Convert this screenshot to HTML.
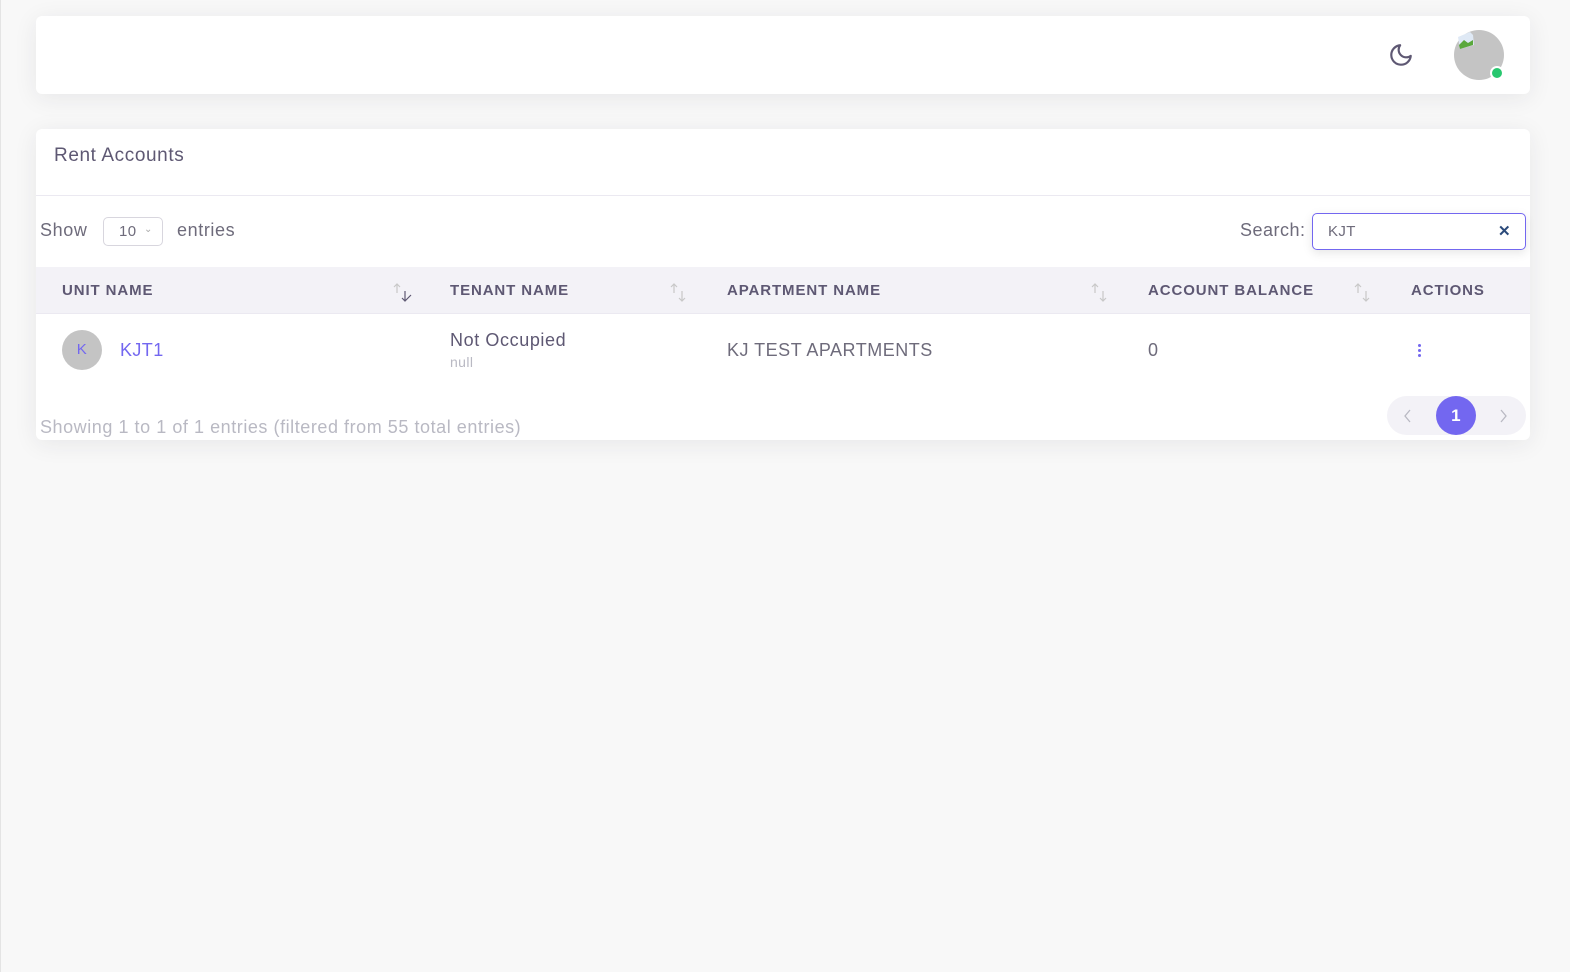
<!DOCTYPE html>
<html><head><meta charset="utf-8"><style>
*{box-sizing:border-box;margin:0;padding:0}
body{width:1570px;height:972px;background:#f8f8f8;font-family:"Liberation Sans",sans-serif;color:#6e6b7b;position:relative;overflow:hidden}
.edge{position:absolute;left:0;top:0;width:1px;height:972px;background:#e4e4e4}
.card{position:absolute;background:#fff;border-radius:6px;box-shadow:0 4px 24px rgba(34,41,47,.08)}
.a{position:absolute;white-space:nowrap;letter-spacing:.4px}
.th{font-size:15px;font-weight:bold;letter-spacing:.9px;color:#5e5873;top:282px}
.sort{position:absolute;top:281px;width:20px;height:24px}
</style></head><body>
<div class="edge"></div>
<div class="card" style="left:36px;top:16px;width:1494px;height:78px">
 <svg class="a" style="left:1352px;top:26px" width="26" height="26" viewBox="0 0 24 24" fill="none" stroke="#5e5873" stroke-width="2" stroke-linecap="round" stroke-linejoin="round"><path d="M21 12.79A9 9 0 1 1 11.21 3 7 7 0 0 0 21 12.79z"/></svg>
 <div class="a" style="left:1418px;top:14px;width:50px;height:50px;border-radius:50%;background:#c4c4c4"></div>
 <svg class="a" style="left:1420px;top:15px" width="20" height="20" viewBox="0 0 20 20"><path d="M2 6L14 1l3 3 1 10-14 4z" fill="#dfe9f5"/><path d="M3 14l5-5 4 3 5-3v5L4 18z" fill="#5aa83b"/></svg>
 <div class="a" style="left:1454px;top:50px;width:14px;height:14px;border-radius:50%;background:#28c76f;border:2px solid #fff"></div>
</div>
<div class="card" style="left:36px;top:129px;width:1494px;height:311px">
 <div class="a" style="left:18px;top:16px;font-size:19px;color:#5e5873;letter-spacing:.6px">Rent Accounts</div>
 <div class="a" style="left:0;top:66px;width:1494px;border-top:1px solid #ebe9f1"></div>
 <div class="a" style="left:4px;top:91px;font-size:18px;letter-spacing:.6px">Show</div>
 <div class="a" style="left:67px;top:88px;width:60px;height:29px;border:1px solid #d8d6de;border-radius:5px;font-size:15px;padding:5px 0 0 15px">10<span style="position:absolute;left:40px;top:6px;font-size:10px;color:#aaa">⌄</span></div>
 <div class="a" style="left:141px;top:91px;font-size:18px;letter-spacing:.6px">entries</div>
 <div class="a" style="left:1204px;top:91px;font-size:18px;letter-spacing:.5px">Search:</div>
 <div class="a" style="left:1276px;top:84px;width:214px;height:37px;border:1px solid #7367f0;border-radius:5px;box-shadow:0 3px 10px rgba(0,0,0,.1);font-size:15px;padding:9px 0 0 15px">KJT<span style="position:absolute;right:14px;top:8px;font-weight:bold;color:#2b4a7a;font-size:15px">✕</span></div>
 <div class="a" style="left:0;top:138px;width:1494px;height:47px;background:#f3f2f7;border-bottom:1px solid #ebe9f1"></div>
</div>
<div class="a th" style="left:62px">UNIT NAME</div>
<div class="a th" style="left:450px">TENANT NAME</div>
<div class="a th" style="left:727px">APARTMENT NAME</div>
<div class="a th" style="left:1148px">ACCOUNT BALANCE</div>
<div class="a th" style="left:1411px">ACTIONS</div>
<svg class="sort" style="left:392px" viewBox="0 0 20 24" fill="none" stroke-width="1.2"><path d="M5 12V3M2 6l3-3 3 3" stroke="#c8c8c8"/><path d="M13 10v10M10 17l3 3 3-3M16 17l3-3" stroke="#5e5873"/></svg>
<svg class="sort" style="left:669px" viewBox="0 0 20 24" fill="none" stroke="#c8c8c8" stroke-width="1.2"><path d="M5 12V3M2 6l3-3 3 3M13 10v10M10 17l3 3 3-3"/></svg>
<svg class="sort" style="left:1090px" viewBox="0 0 20 24" fill="none" stroke="#c8c8c8" stroke-width="1.2"><path d="M5 12V3M2 6l3-3 3 3M13 10v10M10 17l3 3 3-3"/></svg>
<svg class="sort" style="left:1353px" viewBox="0 0 20 24" fill="none" stroke="#c8c8c8" stroke-width="1.2"><path d="M5 12V3M2 6l3-3 3 3M13 10v10M10 17l3 3 3-3"/></svg>
<div class="a" style="left:62px;top:330px;width:40px;height:40px;border-radius:50%;background:#c4c4c4;color:#7367f0;font-size:15px;text-align:center;line-height:40px">K</div>
<div class="a" style="left:120px;top:340px;font-size:18px;color:#7367f0">KJT1</div>
<div class="a" style="left:450px;top:330px;font-size:18px;color:#5e5873;letter-spacing:.6px">Not Occupied</div>
<div class="a" style="left:450px;top:354px;font-size:14px;color:#b9b9c3">null</div>
<div class="a" style="left:727px;top:340px;font-size:18px;letter-spacing:.5px">KJ TEST APARTMENTS</div>
<div class="a" style="left:1148px;top:340px;font-size:18px">0</div>
<div class="a" style="left:1418px;top:344px;width:4px">
 <div style="width:3px;height:3px;border-radius:50%;background:#7367f0;margin-bottom:2px"></div><div style="width:3px;height:3px;border-radius:50%;background:#7367f0;margin-bottom:2px"></div><div style="width:3px;height:3px;border-radius:50%;background:#7367f0"></div></div>
<div class="a" style="left:40px;top:417px;font-size:18px;color:#b9b9c3;letter-spacing:.55px">Showing 1 to 1 of 1 entries (filtered from 55 total entries)</div>
<div class="a" style="left:1387px;top:396px;width:139px;height:39px;border-radius:20px;background:#f3f2f7"></div>
<svg class="a" style="left:1403px;top:409px" width="10" height="14" viewBox="0 0 10 14" fill="none" stroke="#b9b9c3" stroke-width="1.3"><path d="M7 1L2 7l5 6"/></svg>
<svg class="a" style="left:1498px;top:409px" width="10" height="14" viewBox="0 0 10 14" fill="none" stroke="#b9b9c3" stroke-width="1.3"><path d="M3 1l5 6-5 6"/></svg>
<div class="a" style="left:1436px;top:396px;width:40px;height:39px;border-radius:50%;background:#7367f0;color:#fff;font-weight:bold;font-size:17px;text-align:center;line-height:39px">1</div>
</body></html>
